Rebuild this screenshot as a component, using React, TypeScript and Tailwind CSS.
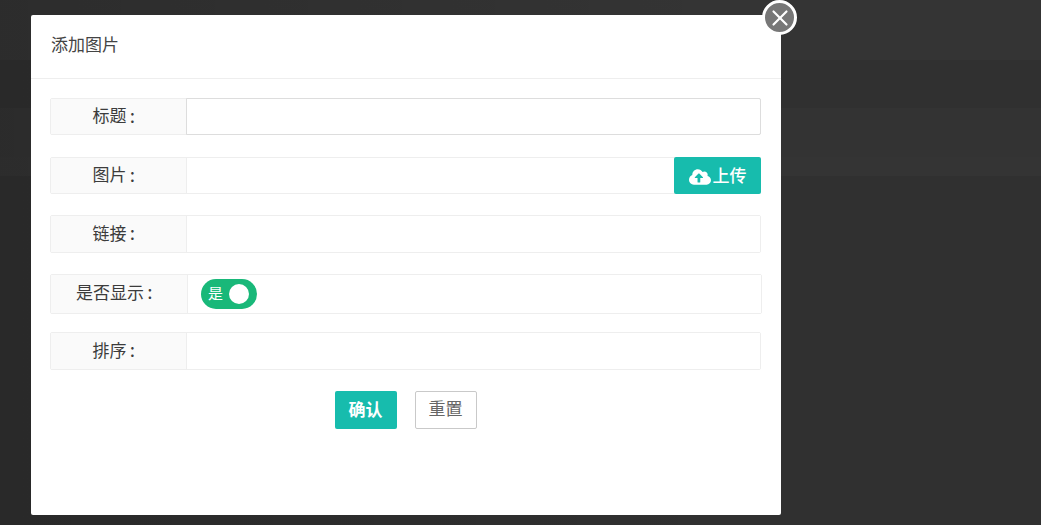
import { FaCloudUploadAlt } from "react-icons/fa";
import { X } from "lucide-react";

function Row({
  label,
  className,
  labelClass = "w-[136px]",
  children,
}: {
  label: string;
  className: string;
  labelClass?: string;
  children?: React.ReactNode;
}) {
  return (
    <div className={`flex rounded-[2px] border border-[#eeeeee] ${className}`}>
      <div
        className={`flex shrink-0 items-center justify-center border-r border-[#eeeeee] bg-[#fafafa] pt-px text-[17px] text-[#3c3c3c] ${labelClass}`}
      >
        {label}
        <span className="w-[18px] -translate-y-[2px] pr-[6px] text-center font-['Noto_Sans_CJK_JP',sans-serif] text-[19px]">:</span>
      </div>
      <div className="relative flex flex-1 items-center bg-white">{children}</div>
    </div>
  );
}

export default function App() {
  return (
    <div className="relative h-[525px] w-[1041px] overflow-hidden bg-[#303030] font-['Liberation_Sans','Noto_Sans_CJK_JP',sans-serif]">
      {/* dimmed page behind the dialog */}
      <div className="h-[60px] bg-[#343434]" />
      <div className="h-[48px] bg-[#303030]" />
      <div className="h-[49px] bg-[#333333]" />
      <div className="h-[19px] bg-[#343434]" />
      <div className="absolute inset-0 bg-gradient-to-r from-black/15 to-transparent to-70%" />

      <div className="absolute left-[31px] top-[15px] flex h-[500px] w-[750px] flex-col rounded-[2px] bg-white">
        <div className="flex h-[64px] shrink-0 items-center border-b border-[#eeeeee] pb-[2px] pl-5 text-[17px] text-[#444444]">
          添加图片
        </div>

        <div className="pl-[19px] pr-5 pt-[19px]">
          <Row label="标题" className="h-[37px]">
            <div className="absolute -inset-y-px -left-px -right-px rounded-r-[2px] border border-[#dddddd]" />
          </Row>
          <Row label="图片" className="mt-[22px] h-[37px]">
            <button className="absolute -bottom-px -right-px -top-px flex w-[87px] items-center justify-center gap-[2px] rounded-[2px] bg-[#17bcad] pt-[2px] text-[17px] font-medium text-white">
              <FaCloudUploadAlt className="h-[22px] w-[22px]" />
              上传
            </button>
          </Row>
          <Row label="链接" className="mt-[21px] h-[38px]" />
          <Row
            label="是否显示"
            className="mt-[21px] h-[40px] w-[712px]"
            labelClass="w-[137px] pb-[2px]"
          >
            <div className="ml-[13px] flex h-[30px] w-[56px] items-center justify-between rounded-full bg-[#19b879] pl-[7px] pr-2 text-[15px] text-white">
              是
              <span className="h-5 w-5 rounded-full bg-white" />
            </div>
          </Row>
          <Row label="排序" className="mt-[18px] h-[38px]" />

          <div className="mt-[21px] flex justify-center gap-[18px]">
            <button className="h-[38px] w-[62px] rounded-[2px] bg-[#17bcad] pt-px text-[17px] font-bold text-white">
              确认
            </button>
            <button className="h-[38px] w-[62px] rounded-[2px] border border-[#c9c9c9] bg-white text-[17px] text-[#666666]">
              重置
            </button>
          </div>
        </div>

        <button className="absolute -right-4 -top-[15px] flex h-[35px] w-[35px] items-center justify-center rounded-full border-[3px] border-white bg-[#777777] text-white">
          <X className="h-[26px] w-[26px] shrink-0" strokeWidth={2} />
        </button>
      </div>
    </div>
  );
}
